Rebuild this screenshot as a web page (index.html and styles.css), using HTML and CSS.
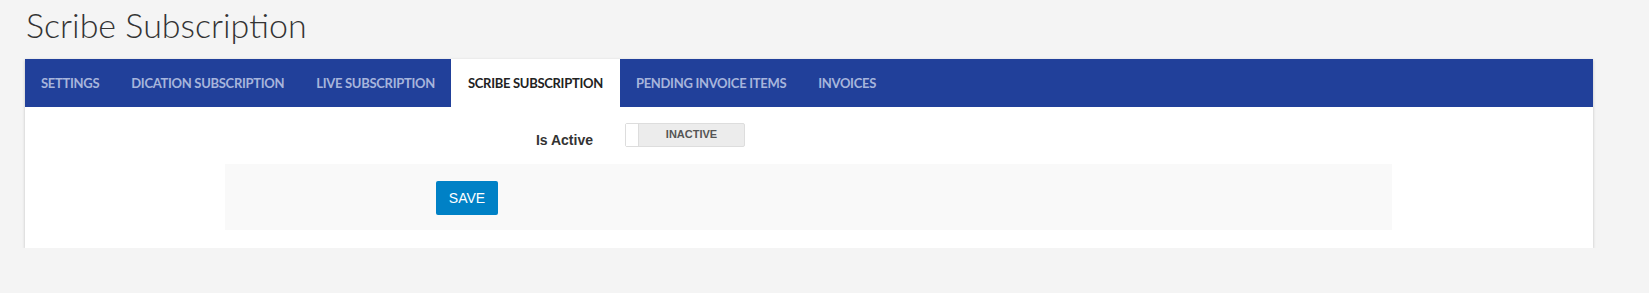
FILE: index.html
```html
<!DOCTYPE html>
<html lang="en">
<head>
  <meta charset="UTF-8" />
  <title>Scribe Subscription</title>
  <link rel="stylesheet" href="styles.css">
</head>
<body>
  <h1 class="page-title">Scribe Subscription</h1>
  <div class="card">
    <ul class="tabs">
      <li class="tab">Settings</li>
      <li class="tab">Dication Subscription</li>
      <li class="tab">Live Subscription</li>
      <li class="tab active">Scribe Subscription</li>
      <li class="tab">Pending Invoice Items</li>
      <li class="tab">Invoices</li>
    </ul>
    <div class="tab-body">
      <div class="form-row">
        <label class="form-label">Is Active</label>
        <div class="toggle">
          <span class="toggle-knob"></span>
          <span class="toggle-text">INACTIVE</span>
        </div>
      </div>
      <div class="form-footer">
        <button class="btn-save">SAVE</button>
      </div>
    </div>
  </div>
</body>
</html>
```

FILE: styles.css
```css
body {
  margin: 0;
  background: #f4f4f4;
  font-family: "Lato", "Open Sans", sans-serif;
  padding: 0 56px 0 25px;
}
.page-title {
  margin: 0;
  padding: 5px 0 0 1px;
  height: 56px;
  box-sizing: border-box;
  font-size: 34px;
  font-weight: 300;
  color: #333;
  line-height: 40px;
}
.card {
  background: #fff;
  box-shadow: 0 1px 3px rgba(0, 0, 0, 0.2);
  margin-top: 3px;
  padding-bottom: 18px;
}
.tabs {
  list-style: none;
  margin: 0;
  padding: 0;
  display: flex;
  background: #21409a;
  height: 48px;
}
.tab {
  padding: 0 16px;
  line-height: 48px;
  font-size: 13px;
  font-weight: 700;
  letter-spacing: -0.3px;
  text-transform: uppercase;
  color: #a7b5dc;
  white-space: nowrap;
}
.tab.active {
  background: #fff;
  color: #222;
  padding: 0 17px;
}
.tab-body {
  padding-top: 16px;
}
.form-row {
  display: flex;
  align-items: flex-start;
  height: 24px;
}
.form-label {
  width: 568px;
  text-align: right;
  font-family: "Liberation Sans", Arial, sans-serif;
  font-weight: 700;
  font-size: 14px;
  line-height: 24px;
  padding-top: 5px;
  color: #333;
  margin-right: 32px;
}
.toggle {
  display: flex;
  width: 120px;
  height: 24px;
  box-sizing: border-box;
  border: 1px solid #ddd;
  border-radius: 2px;
  background: #ececec;
}
.toggle-knob {
  width: 12px;
  background: #fff;
  border-right: 1px solid #ddd;
}
.toggle-text {
  flex: 1;
  text-align: center;
  font-family: "Liberation Sans", Arial, sans-serif;
  font-size: 11px;
  font-weight: 700;
  color: #555;
  line-height: 21px;
}
.form-footer {
  margin: 17px 201px 0 200px;
  background: #f9f9f9;
  height: 66px;
  box-sizing: border-box;
  padding: 17px 0 0 211px;
}
.btn-save {
  width: 62px;
  height: 34px;
  border: 0;
  border-radius: 2px;
  background: #0081c6;
  color: #fff;
  font-family: "Liberation Sans", Arial, sans-serif;
  font-size: 14px;
  padding: 0;
}
```
